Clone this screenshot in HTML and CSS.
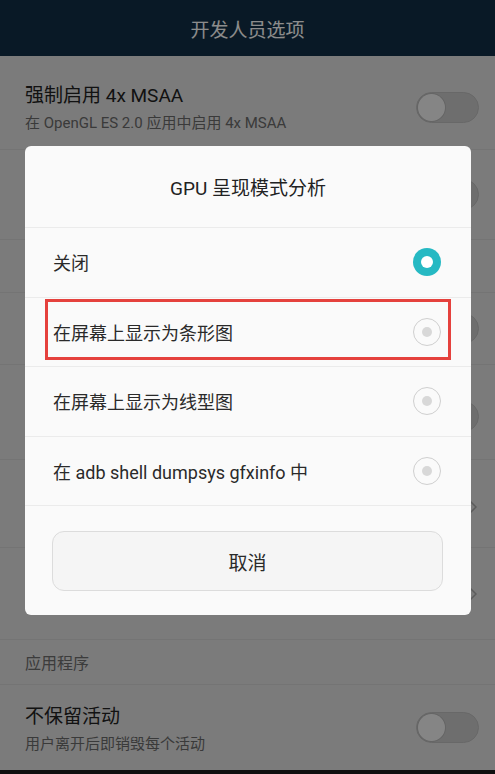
FILE: index.html
```html
<!DOCTYPE html>
<html lang="zh-CN">
<head>
<meta charset="utf-8">
<title>开发人员选项</title>
<link rel="stylesheet" href="styles.css">
</head>
<body>
<div class="screen">
  <header class="appbar">开发人员选项</header>
  <main class="list">
    <div class="pref pref-a">
      <div class="pref-text">
        <div class="pref-title">强制启用 4x MSAA</div>
        <div class="pref-sub">在 OpenGL ES 2.0 应用中启用 4x MSAA</div>
      </div>
      <span class="switch"></span>
    </div>
    <div class="pref pref-hidden pref-b">
      <span class="switch"></span>
    </div>
    <div class="category cat-a"></div>
    <div class="pref pref-hidden pref-c">
      <span class="switch"></span>
    </div>
    <div class="pref pref-hidden pref-d">
      <span class="switch"></span>
    </div>
    <div class="pref pref-hidden pref-e">
      <svg class="chev" width="8" height="14" viewBox="0 0 8 14"><path d="M1 1l6 6-6 6" fill="none" stroke="#a8a8a8" stroke-width="1.5"/></svg>
    </div>
    <div class="pref pref-hidden pref-f">
      <svg class="chev" width="8" height="14" viewBox="0 0 8 14"><path d="M1 1l6 6-6 6" fill="none" stroke="#a8a8a8" stroke-width="1.5"/></svg>
    </div>
    <div class="category cat-b">应用程序</div>
    <div class="pref pref-g">
      <div class="pref-text">
        <div class="pref-title">不保留活动</div>
        <div class="pref-sub">用户离开后即销毁每个活动</div>
      </div>
      <span class="switch"></span>
    </div>
  </main>
  <div class="navbar"></div>

  <div class="scrim"></div>

  <section class="dialog">
    <h2 class="dialog-title">GPU 呈现模式分析</h2>
    <ul class="options">
      <li class="option">
        <span class="option-label">关闭</span>
        <span class="radio radio-on"></span>
      </li>
      <li class="option option-marked">
        <span class="option-label">在屏幕上显示为条形图</span>
        <span class="radio"></span>
        <span class="highlight"></span>
      </li>
      <li class="option">
        <span class="option-label">在屏幕上显示为线型图</span>
        <span class="radio"></span>
      </li>
      <li class="option">
        <span class="option-label">在 adb shell dumpsys gfxinfo 中</span>
        <span class="radio"></span>
      </li>
    </ul>
    <div class="dialog-footer">
      <button class="cancel">取消</button>
    </div>
  </section>
</div>
</body>
</html>
```

FILE: styles.css
```css
* { box-sizing: border-box; }

html, body {
  margin: 0;
  padding: 0;
  background: #000;
}

body {
  font-family: "Roboto", "Noto Sans CJK SC", sans-serif;
  color: #222;
}

.screen {
  position: relative;
  width: 495px;
  height: 774px;
  overflow: hidden;
  display: flex;
  flex-direction: column;
  background: #e0e0e0;
}

.appbar {
  height: 56px;
  flex: none;
  display: flex;
  align-items: center;
  justify-content: center;
  background: #122f45;
  color: #ffffff;
  font-size: 19px;
}

.list {
  flex: 1;
  display: flex;
  flex-direction: column;
}

.pref {
  display: flex;
  align-items: flex-start;
  justify-content: space-between;
  padding: 0 16px 0 25px;
  border-bottom: 1px solid #d3d3d3;
  flex: none;
}

.pref-hidden {
  align-items: center;
  justify-content: flex-end;
}

.pref-text {
  display: flex;
  flex-direction: column;
}

.pref-title {
  font-size: 19px;
  line-height: 26px;
  color: #222;
}

.pref-sub {
  font-size: 15px;
  line-height: 22px;
  margin-top: 3px;
  color: #6b6b6b;
}

.pref-a { height: 94px; padding-top: 27px; }
.pref-b { height: 90px; }
.pref-c { height: 72px; }
.pref-d { height: 95px; padding-top: 8px; }
.pref-e { height: 88px; padding-top: 6px; }
.pref-f { height: 92px; }
.pref-g { height: 85px; padding-top: 19px; border-bottom: none; }

.pref-a .switch { margin-top: 9px; }
.pref-g .switch { margin-top: 8px; }

.chev { margin-right: 2px; }

.category {
  flex: none;
  display: flex;
  align-items: center;
  padding-left: 25px;
  font-size: 16px;
  color: #6d6d6d;
  border-bottom: 1px solid #d3d3d3;
}

.cat-a { height: 53px; }
.cat-b { height: 45px; }

.switch {
  position: relative;
  flex: none;
  width: 63px;
  height: 31px;
  border-radius: 16px;
  background: #c9c9c9;
  border: 1px solid #bdbdbd;
}

.switch::before {
  content: "";
  position: absolute;
  left: 1px;
  top: 1px;
  width: 27px;
  height: 27px;
  border-radius: 50%;
  background: #f3f3f3;
  box-shadow: 0 0 0 1px #b8b8b8;
}

.navbar {
  height: 4px;
  flex: none;
  background: #1d1d1d;
}

.scrim {
  position: absolute;
  inset: 0;
  background: rgba(0, 0, 0, 0.45);
}

.dialog {
  position: absolute;
  left: 25px;
  top: 146px;
  width: 446px;
  background: #fafafa;
  border-radius: 6px;
  display: flex;
  flex-direction: column;
}

.dialog-title {
  margin: 0;
  height: 82px;
  display: flex;
  align-items: center;
  justify-content: center;
  font-size: 19px;
  font-weight: normal;
  color: #222;
  border-bottom: 1px solid #ebebeb;
}

.options {
  list-style: none;
  margin: 0;
  padding: 0;
}

.option {
  position: relative;
  height: 69.5px;
  display: flex;
  align-items: center;
  justify-content: space-between;
  padding: 0 30px 0 28px;
  border-bottom: 1px solid #ebebeb;
}

.option-label {
  font-size: 18px;
  color: #2a2a2a;
}

.radio {
  position: relative;
  width: 28px;
  height: 28px;
  border-radius: 50%;
  border: 1px solid #cfcfcf;
  background: #fafafa;
  display: flex;
  align-items: center;
  justify-content: center;
}

.radio::after {
  content: "";
  width: 10px;
  height: 10px;
  border-radius: 50%;
  background: #d8d8d8;
}

.radio-on {
  border: none;
  background: #26b9c3;
}

.radio-on::after {
  width: 12px;
  height: 12px;
  background: #ffffff;
}

.highlight {
  position: absolute;
  left: 20px;
  right: 20px;
  top: 1px;
  bottom: 6px;
  border: 3px solid #e5413d;
  pointer-events: none;
}

.dialog-footer {
  padding: 25px 28px 24px 27px;
}

.cancel {
  display: block;
  width: 100%;
  height: 60px;
  border: 1px solid #dcdcdc;
  border-radius: 12px;
  background: #f5f5f5;
  font-family: "Roboto", "Noto Sans CJK SC", sans-serif;
  font-size: 19px;
  color: #2a2a2a;
}
```
